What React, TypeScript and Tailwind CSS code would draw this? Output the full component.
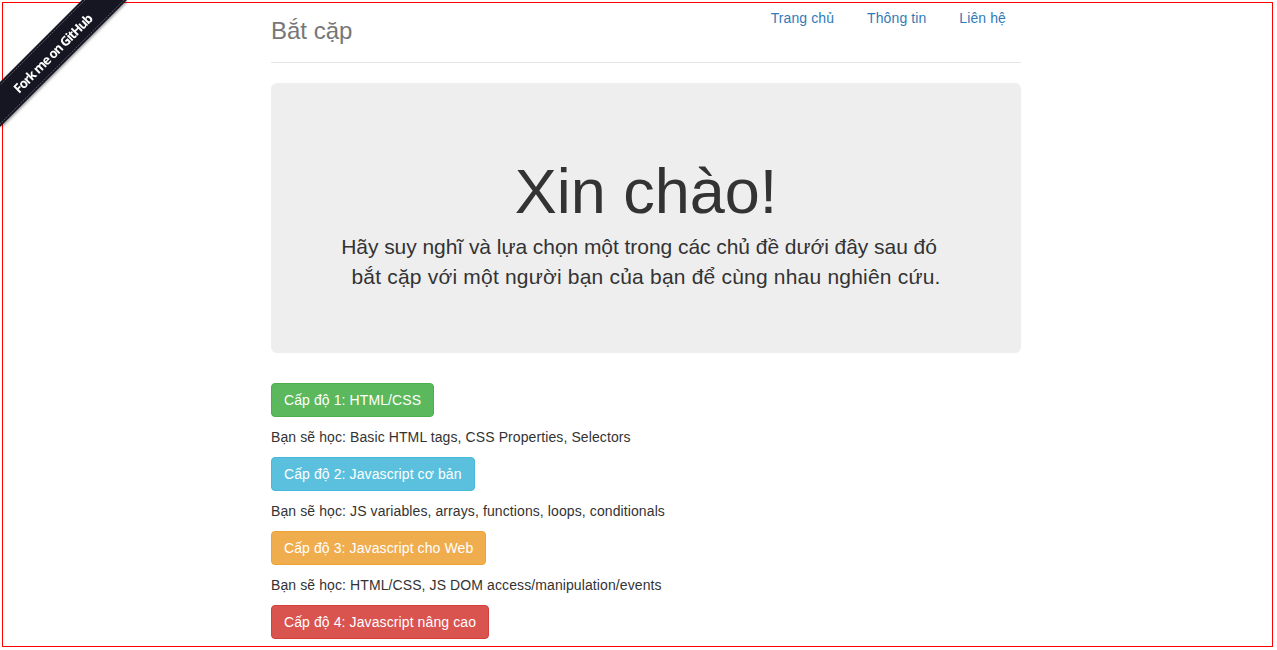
const levels = [
    {
        label: "Cấp độ 1: HTML/CSS",
        tone: "bg-[#5cb85c] border-[#4cae4c]",
        desc: "Bạn sẽ học: Basic HTML tags, CSS Properties, Selectors",
    },
    {
        label: "Cấp độ 2: Javascript cơ bản",
        tone: "bg-[#5bc0de] border-[#46b8da]",
        desc: "Bạn sẽ học: JS variables, arrays, functions, loops, conditionals",
    },
    {
        label: "Cấp độ 3: Javascript cho Web",
        tone: "bg-[#f0ad4e] border-[#eea236]",
        desc: "Bạn sẽ học: HTML/CSS, JS DOM access/manipulation/events",
    },
    {
        label: "Cấp độ 4: Javascript nâng cao",
        tone: "bg-[#d9534f] border-[#d43f3a]",
        desc: "",
    },
];

function ForkRibbon() {
    return (
        <a href="#" className="fixed left-0 top-0 z-20 block">
            <svg width="149" height="149" viewBox="0 0 149 149">
                <defs>
                    <filter id="rb-shadow" x="-20%" y="-20%" width="140%" height="140%">
                        <feDropShadow dx="1" dy="1" stdDeviation="1.5" floodColor="#000" floodOpacity="0.45" />
                    </filter>
                </defs>
                <polygon points="82,0 127,0 0,127 0,82" fill="#121621" filter="url(#rb-shadow)" />
                <line x1="85" y1="0" x2="0" y2="85" stroke="#ffffff" strokeOpacity="0.28" strokeWidth="1" strokeDasharray="2 1" />
                <line x1="124" y1="0" x2="0" y2="124" stroke="#ffffff" strokeOpacity="0.28" strokeWidth="1" strokeDasharray="2 1" />
                <text
                    x="53"
                    y="53"
                    transform="rotate(-45 53 53)"
                    textAnchor="middle"
                    dominantBaseline="central"
                    fill="#ffffff"
                    fontSize="13"
                    fontWeight="700"
                    fontFamily="'Noto Sans', 'Liberation Sans', sans-serif"
                    textLength="106"
                >
                    Fork me on GitHub
                </text>
            </svg>
        </a>
    );
}

export default function App() {
    return (
        <div className="min-h-screen bg-white font-['Liberation_Sans',Arial,sans-serif] text-[14px] leading-[20px] tracking-[0.1px] text-[#333]">
            {/* Page outline */}
            <div className="pointer-events-none fixed left-[2px] top-[2px] z-10 h-[645px] w-[1271px] border border-[#ff0000]" />

            <ForkRibbon />

            <div className="ml-[271px] w-[750px]">
                {/* Header */}
                <div className="flex h-[63px] items-start justify-between border-b border-[#e5e5e5]">
                    <h3 className="mt-[11px] text-[24px] leading-[40px] tracking-normal text-[#777]">Bắt cặp</h3>
                    <ul className="flex gap-[3px]">
                        <li><a href="#" className="block px-[15px] py-[8px] text-[#337ab7]">Trang chủ</a></li>
                        <li><a href="#" className="block px-[15px] py-[8px] text-[#337ab7]">Thông tin</a></li>
                        <li><a href="#" className="block px-[15px] py-[8px] text-[#337ab7]">Liên hệ</a></li>
                    </ul>
                </div>

                {/* Jumbotron */}
                <div className="mt-[20px] h-[270px] rounded-[6px] bg-[#eeeeee] px-[60px] pt-[74px] text-center">
                    <h1 className="text-[63px] leading-[69px] tracking-normal">Xin chào!</h1>
                    <p className="mt-[6px] text-[21px] leading-[30px] tracking-[-0.05px]">
                        <span className="inline-block pr-[14px]">Hãy suy nghĩ và lựa chọn một trong các chủ đề dưới đây sau đó</span>
                        <br />
                        <span className="tracking-[0.2px]">bắt cặp với một người bạn của bạn để cùng nhau nghiên cứu.</span>
                    </p>
                </div>

                {/* Levels */}
                <div className="mt-[30px] flex flex-col items-start">
                    {levels.map((lv) => (
                        <div key={lv.label} className="flex flex-col items-start">
                            <a href="#" className={`rounded-[4px] border px-[12px] py-[6px] text-white ${lv.tone}`}>
                                {lv.label}
                            </a>
                            {lv.desc && <p className="my-[10px]">{lv.desc}</p>}
                        </div>
                    ))}
                </div>
            </div>
        </div>
    );
}
